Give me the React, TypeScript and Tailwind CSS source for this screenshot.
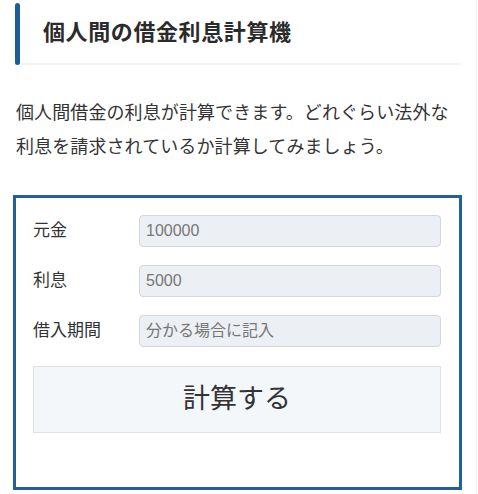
import React from "react";

const font = { fontFamily: '"Liberation Sans", "Noto Sans CJK JP", sans-serif' };

export default function App() {
  return (
    <div className="w-[477px] min-h-[494px] border-r border-[#f0f0f0] bg-white text-[#333]" style={font}>
      <div className="pt-[3px] pl-[15px] w-[460px]">
        <div className="flex h-[62px]">
          <div className="w-[5px] rounded-[3px] bg-[#1e5c98]" />
          <div className="flex-1 flex items-center pl-[23px] border-b-2 border-[#f3f3f3]">
            <h1 className="text-[22px] font-bold leading-none text-[#2b2b2b] tracking-[0.6px]">個人間の借金利息計算機</h1>
          </div>
        </div>
      </div>
      <p className="mt-[31px] px-[16px] text-[18px] leading-[34px] text-[#333] tracking-[0.1px]">
        個人間借金の利息が計算できます。どれぐらい法外な利息を請求されているか計算してみましょう。
      </p>
      <div className="mt-[31px] ml-[13px] w-[449px] h-[295px] border-[3px] border-[#245f9a] pt-[17px] pl-[17px] pr-[18px]">
        <div className="flex flex-col gap-[18px]">
          {[
            ["元金", "100000"],
            ["利息", "5000"],
            ["借入期間", "分かる場合に記入"],
          ].map(([label, value]) => (
            <div key={label} className="flex items-center h-[32px]">
              <div className="w-[106px] text-[17px] text-[#333]">{label}</div>
              <div className="flex-1 h-[32px] rounded-[4px] border border-[#d4d6d9] bg-[#eceff3] flex items-center pl-[6px] text-[16px] text-[#777]">
                {value}
              </div>
            </div>
          ))}
        </div>
        <div className="mt-[19px] h-[67px] border border-[#dfe2e5] bg-[#f4f7fa] flex items-center justify-center text-[27px] text-[#333]">
          計算する
        </div>
      </div>
    </div>
  );
}
